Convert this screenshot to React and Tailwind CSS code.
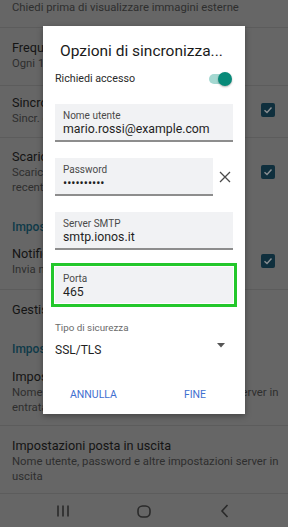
import React from 'react';

const font = { fontFamily: 'Roboto, "Noto Sans", sans-serif' };

const Checkbox = () => (
  <div className="w-[14px] h-[14px] rounded-[2px] bg-[#0f2f3d] flex items-center justify-center">
    <svg width="10" height="10" viewBox="0 0 10 10" fill="none">
      <path d="M1.5 5.2 L4 7.5 L8.5 2.5" stroke="#8a8f93" strokeWidth="1.4" />
    </svg>
  </div>
);

// rows under the dialog are cut at its left edge
const Row = ({ title, lines = [], check, checkTop = '', clip, className = '' }) => (
  <div className={`flex items-start justify-between pl-3 pr-[13px] ${className}`}>
    <div className={clip ? 'w-[31px] overflow-hidden' : 'min-w-0'}>
      <div className="text-[12.7px] leading-4 text-[#141414] whitespace-nowrap">{title}</div>
      {lines.map((l) => (
        <div key={l} className="text-[11.3px] leading-[15px] text-[#2e2e2e] whitespace-nowrap">{l}</div>
      ))}
    </div>
    {check && <div className={checkTop}>{check}</div>}
  </div>
);

const Field = ({ label, value, className = '', underline = true }) => (
  <div className={`bg-[#f1f2f4] pl-2 ${className}`}>
    <div className="pt-[6px] text-[10px] leading-3 text-[#4a4a4a]">{label}</div>
    <div className="text-[12.3px] leading-[15px] text-[#1f1f1f] pb-[3px]">{value}</div>
    {underline && <div className="h-[2px] bg-[#8d8d8d] -ml-2" />}
  </div>
);

export default function App() {
  return (
    <div className="relative w-[288px] h-[527px] overflow-hidden bg-[#666666]" style={font}>
      {/* dimmed settings list */}
      <div className="flex flex-col">
        <div className="h-[27px] pl-3 text-[11.3px] leading-4 text-[#2e2e2e] whitespace-nowrap">
          Chiedi prima di visualizzare immagini esterne
        </div>
        <div className="h-px bg-[#5c5c5c]" />
        <Row clip className="h-[57px] pt-3" title="Frequenza di controllo" lines={['Ogni 15 minuti']} />
        <div className="h-px bg-[#5c5c5c]" />
        <Row
          clip
          className="h-[51px] pt-[9px]"
          title="Sincronizza account"
          lines={['Sincr. email di questo account']}
          check={<Checkbox />}
          checkTop="mt-[8px]"
        />
        <div className="h-px bg-[#5c5c5c]" />
        <Row
          clip
          className="h-[67px] pt-[11px]"
          title="Scarica allegati"
          lines={['Scarica automaticamente allegati', 'recenti tramite Wi-Fi']}
          check={<Checkbox />}
          checkTop="mt-[16px]"
        />
        <div className="h-[38px] pl-3 pt-[14px] text-[12px] leading-4 font-medium text-[#0f3a49] whitespace-nowrap">
          <div className="w-[31px] overflow-hidden">Impostazioni notifiche</div>
        </div>
        <Row
          clip
          className="h-[46px] pt-[3px]"
          title="Notifiche"
          lines={['Invia notifiche per nuove email']}
          check={<Checkbox />}
          checkTop="mt-[8px]"
        />
        <div className="h-px bg-[#5c5c5c]" />
        <Row clip className="h-[40px] pt-3" title="Gestisci cartelle" />
        <div className="h-[32px] pl-3 pt-[11px] text-[12px] leading-4 font-medium text-[#0f3a49] whitespace-nowrap">
          <div className="w-[31px] overflow-hidden">Impostazioni server</div>
        </div>
        <Row
          className="h-[63px] pt-[7px]"
          title="Impostazioni posta in entrata"
          lines={['Nome utente, password e altre impostazioni server in', 'entrata']}
        />
        <div className="h-px bg-[#5c5c5c]" />
        <Row
          className="h-[67px] pt-3"
          title="Impostazioni posta in uscita"
          lines={['Nome utente, password e altre impostazioni server in', 'uscita']}
        />
        <div className="h-px bg-[#5c5c5c]" />
        {/* nav bar */}
        <div className="h-[34px] flex items-center px-[22px]">
          <div className="flex-1 flex justify-center">
            <svg width="14" height="12" viewBox="0 0 14 12">
              <path d="M2 0.5 V11.5 M7 0.5 V11.5 M12 0.5 V11.5" stroke="#2a2a2a" strokeWidth="1.6" />
            </svg>
          </div>
          <div className="flex-1 flex justify-center">
            <svg width="14" height="13" viewBox="0 0 14 13">
              <rect x="1" y="1" width="12" height="11" rx="4.5" fill="none" stroke="#2a2a2a" strokeWidth="1.6" />
            </svg>
          </div>
          <div className="flex-1 flex justify-center">
            <svg width="10" height="14" viewBox="0 0 10 14">
              <path d="M7.5 1 L2 7 L7.5 13" fill="none" stroke="#2a2a2a" strokeWidth="1.6" />
            </svg>
          </div>
        </div>
      </div>

      {/* dialog */}
      <div className="absolute left-[43px] top-[26px] w-[202px] h-[388px] bg-white shadow-[0_2px_6px_rgba(0,0,0,0.35)] px-3">
        <div className="pt-[14px] pl-[5px] text-[15.5px] leading-[22px] text-[#1a1a1a] whitespace-nowrap">
          Opzioni di sincronizza...
        </div>
        <div className="mt-[7px] h-5 flex items-center justify-between">
          <span className="text-[10.7px] text-[#2a2a2a]">Richiedi accesso</span>
          <div className="relative w-[22px] h-[10px] mr-[2px] rounded-full bg-[#a4d8d1]">
            <div className="absolute -right-[1px] -top-[2px] w-[14px] h-[14px] rounded-full bg-[#088a79] shadow-[0_1px_2px_rgba(0,0,0,0.3)]" />
          </div>
        </div>
        <Field className="mt-[15px]" label="Nome utente" value="mario.rossi@example.com" />
        <div className="mt-[16px] flex items-center">
          <Field className="w-[158px]" label="Password" value="••••••••••" />
          <div className="flex-1 flex justify-center pl-1">
            <svg width="12" height="12" viewBox="0 0 12 12">
              <path d="M1 1 L11 11 M11 1 L1 11" stroke="#4a4a4a" strokeWidth="1.3" />
            </svg>
          </div>
        </div>
        <Field className="mt-[16px]" label="Server SMTP" value="smtp.ionos.it" />
        <div className="mt-[13px] -mx-[4px] border-[3px] border-[#23c72b] p-px">
          <Field className="h-[36px]" label="Porta" value="465" underline={false} />
        </div>
        <div className="mt-[13px] text-[9.8px] leading-4 text-[#6a6a6a]">Tipo di sicurezza</div>
        <div className="mt-[4px] flex items-center justify-between">
          <span className="text-[12px] leading-5 text-[#1f1f1f]">SSL/TLS</span>
          <svg width="8" height="5" viewBox="0 0 8 5" className="mr-[8px] -mt-[10px]">
            <path d="M0 0 H8 L4 4.5 Z" fill="#555" />
          </svg>
        </div>
        <div className="mt-[27px] flex justify-between pl-[15px] pr-[27px]">
          <span className="text-[10.5px] leading-4 text-[#3f6fd0]">ANNULLA</span>
          <span className="text-[10.5px] leading-4 text-[#3f6fd0]">FINE</span>
        </div>
      </div>
    </div>
  );
}
